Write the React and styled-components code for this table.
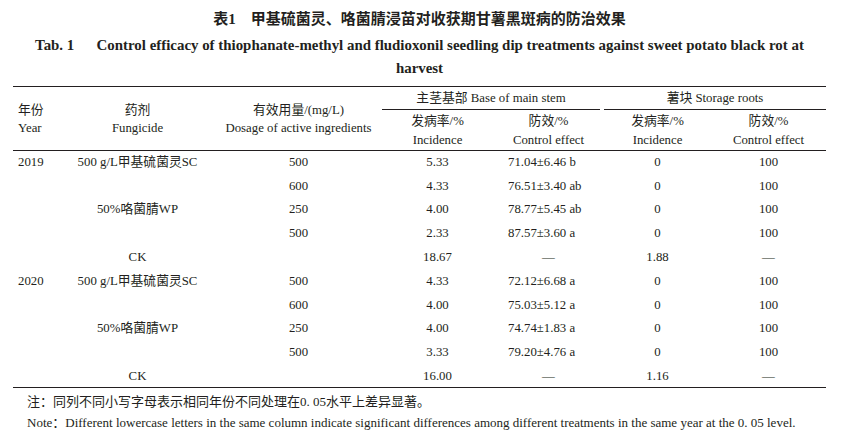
import React from 'react';
import styled, { createGlobalStyle } from 'styled-components';

const rows = [
  { year: '2019', fungicide: '500 g/L甲基硫菌灵SC', dose: '500', stemInc: '5.33', stemEff: '71.04±6.46 b', rootInc: '0', rootEff: '100' },
  { dose: '600', stemInc: '4.33', stemEff: '76.51±3.40 ab', rootInc: '0', rootEff: '100' },
  { fungicide: '50%咯菌腈WP', dose: '250', stemInc: '4.00', stemEff: '78.77±5.45 ab', rootInc: '0', rootEff: '100' },
  { dose: '500', stemInc: '2.33', stemEff: '87.57±3.60 a', rootInc: '0', rootEff: '100' },
  { fungicide: 'CK', stemInc: '18.67', stemEff: '—', rootInc: '1.88', rootEff: '—' },
  { year: '2020', fungicide: '500 g/L甲基硫菌灵SC', dose: '500', stemInc: '4.33', stemEff: '72.12±6.68 a', rootInc: '0', rootEff: '100' },
  { dose: '600', stemInc: '4.00', stemEff: '75.03±5.12 a', rootInc: '0', rootEff: '100' },
  { fungicide: '50%咯菌腈WP', dose: '250', stemInc: '4.00', stemEff: '74.74±1.83 a', rootInc: '0', rootEff: '100' },
  { dose: '500', stemInc: '3.33', stemEff: '79.20±4.76 a', rootInc: '0', rootEff: '100' },
  { fungicide: 'CK', stemInc: '16.00', stemEff: '—', rootInc: '1.16', rootEff: '—' },
];

export default function App() {
  return (
    <>
      <GlobalStyle />
      <Page>
        <CnTitle>表1&emsp;甲基硫菌灵、咯菌腈浸苗对收获期甘薯黑斑病的防治效果</CnTitle>
        <EnTitle>
          Tab. 1&emsp;&ensp;Control efficacy of thiophanate-methyl and fludioxonil seedling dip treatments against sweet potato black rot at
          <br />
          harvest
        </EnTitle>
        <Table>
          <colgroup>
            <col style={{ width: 57 }} />
            <col style={{ width: 135 }} />
            <col style={{ width: 177 }} />
            <col style={{ width: 111 }} />
            <col style={{ width: 111 }} />
            <col style={{ width: 107 }} />
            <col style={{ width: 115 }} />
          </colgroup>
          <thead>
            <GroupRow>
              <HeadCell rowSpan={2} $align="left">年份<br />Year</HeadCell>
              <HeadCell rowSpan={2}>药剂<br />Fungicide</HeadCell>
              <HeadCell rowSpan={2} $shift>有效用量/(mg/L)<br />Dosage of active ingredients</HeadCell>
              <GroupCell colSpan={2}>
                <GroupLabel $gap>主茎基部 Base of main stem</GroupLabel>
              </GroupCell>
              <GroupCell colSpan={2}>
                <GroupLabel>薯块 Storage roots</GroupLabel>
              </GroupCell>
            </GroupRow>
            <SubRow>
              <HeadCell>发病率/%<br />Incidence</HeadCell>
              <HeadCell>防效/%<br />Control effect</HeadCell>
              <HeadCell>发病率/%<br />Incidence</HeadCell>
              <HeadCell>防效/%<br />Control effect</HeadCell>
            </SubRow>
          </thead>
          <tbody>
            {rows.map((r, i) => (
              <DataRow key={i}>
                <Cell $align="left">{r.year}</Cell>
                <Cell>{r.fungicide}</Cell>
                <Cell $shift>{r.dose}</Cell>
                <Cell>{r.stemInc}</Cell>
                <Cell $align={r.stemEff === '—' ? 'center' : 'left'} $effect>{r.stemEff}</Cell>
                <Cell>{r.rootInc}</Cell>
                <Cell>{r.rootEff}</Cell>
              </DataRow>
            ))}
          </tbody>
        </Table>
        <Notes>
          <NoteLine>注：同列不同小写字母表示相同年份不同处理在0. 05水平上差异显著。</NoteLine>
          <NoteLine>Note：Different lowercase letters in the same column indicate significant differences among different treatments in the same year at the 0. 05 level.</NoteLine>
        </Notes>
      </Page>
    </>
  );
}

const GlobalStyle = createGlobalStyle`
  html, body {
    margin: 0;
    background: #ffffff;
  }
  body {
    font-family: 'Liberation Serif', 'Noto Sans CJK SC', serif;
    color: #231f20;
  }
`;

const Page = styled.div`
  width: 842px;
  box-sizing: border-box;
  padding: 8px 16px 0 13px;
`;

const CnTitle = styled.div`
  font-family: 'Liberation Serif', 'Noto Sans CJK SC', sans-serif;
  font-weight: 700;
  font-size: 15px;
  line-height: 22px;
  text-align: center;
`;

const EnTitle = styled.div`
  margin-top: 4px;
  font-weight: 700;
  font-size: 14.9px;
  line-height: 23px;
  text-align: center;
  white-space: nowrap;
`;

const Table = styled.table`
  margin-top: 6px;
  width: 813px;
  table-layout: fixed;
  border-collapse: collapse;
  border-top: 1.5px solid #231f20;
  border-bottom: 1.5px solid #231f20;
  font-size: 12.8px;
`;

const GroupRow = styled.tr`
  height: 23px;
`;

const SubRow = styled.tr`
  height: 40px;
`;

const HeadCell = styled.th`
  font-weight: 400;
  line-height: 18.5px;
  padding: 2px 0 0 ${p => (p.$align === 'left' ? '5px' : p.$shift ? '10px' : '0')};
  text-align: ${p => p.$align || 'center'};
  vertical-align: middle;
  white-space: nowrap;
  border-bottom: 1px solid #231f20;
`;

const GroupCell = styled.th`
  font-weight: 400;
  padding: 0;
  vertical-align: bottom;
`;

const GroupLabel = styled.div`
  line-height: 22px;
  text-align: center;
  margin-right: ${p => (p.$gap ? '4px' : '0')};
  border-bottom: 1px solid #231f20;
`;

const DataRow = styled.tr`
  height: 23.8px;
`;

const Cell = styled.td`
  padding: 0 0 0 ${p => (p.$align === 'left' ? (p.$effect ? '15px' : '5px') : p.$shift ? '10px' : '0')};
  text-align: ${p => p.$align || 'center'};
  vertical-align: middle;
  white-space: nowrap;
  line-height: 16px;
`;

const Notes = styled.div`
  padding: 3px 0 0 14px;
`;

const NoteLine = styled.div`
  font-size: 13px;
  line-height: 21px;
  white-space: nowrap;
`;
